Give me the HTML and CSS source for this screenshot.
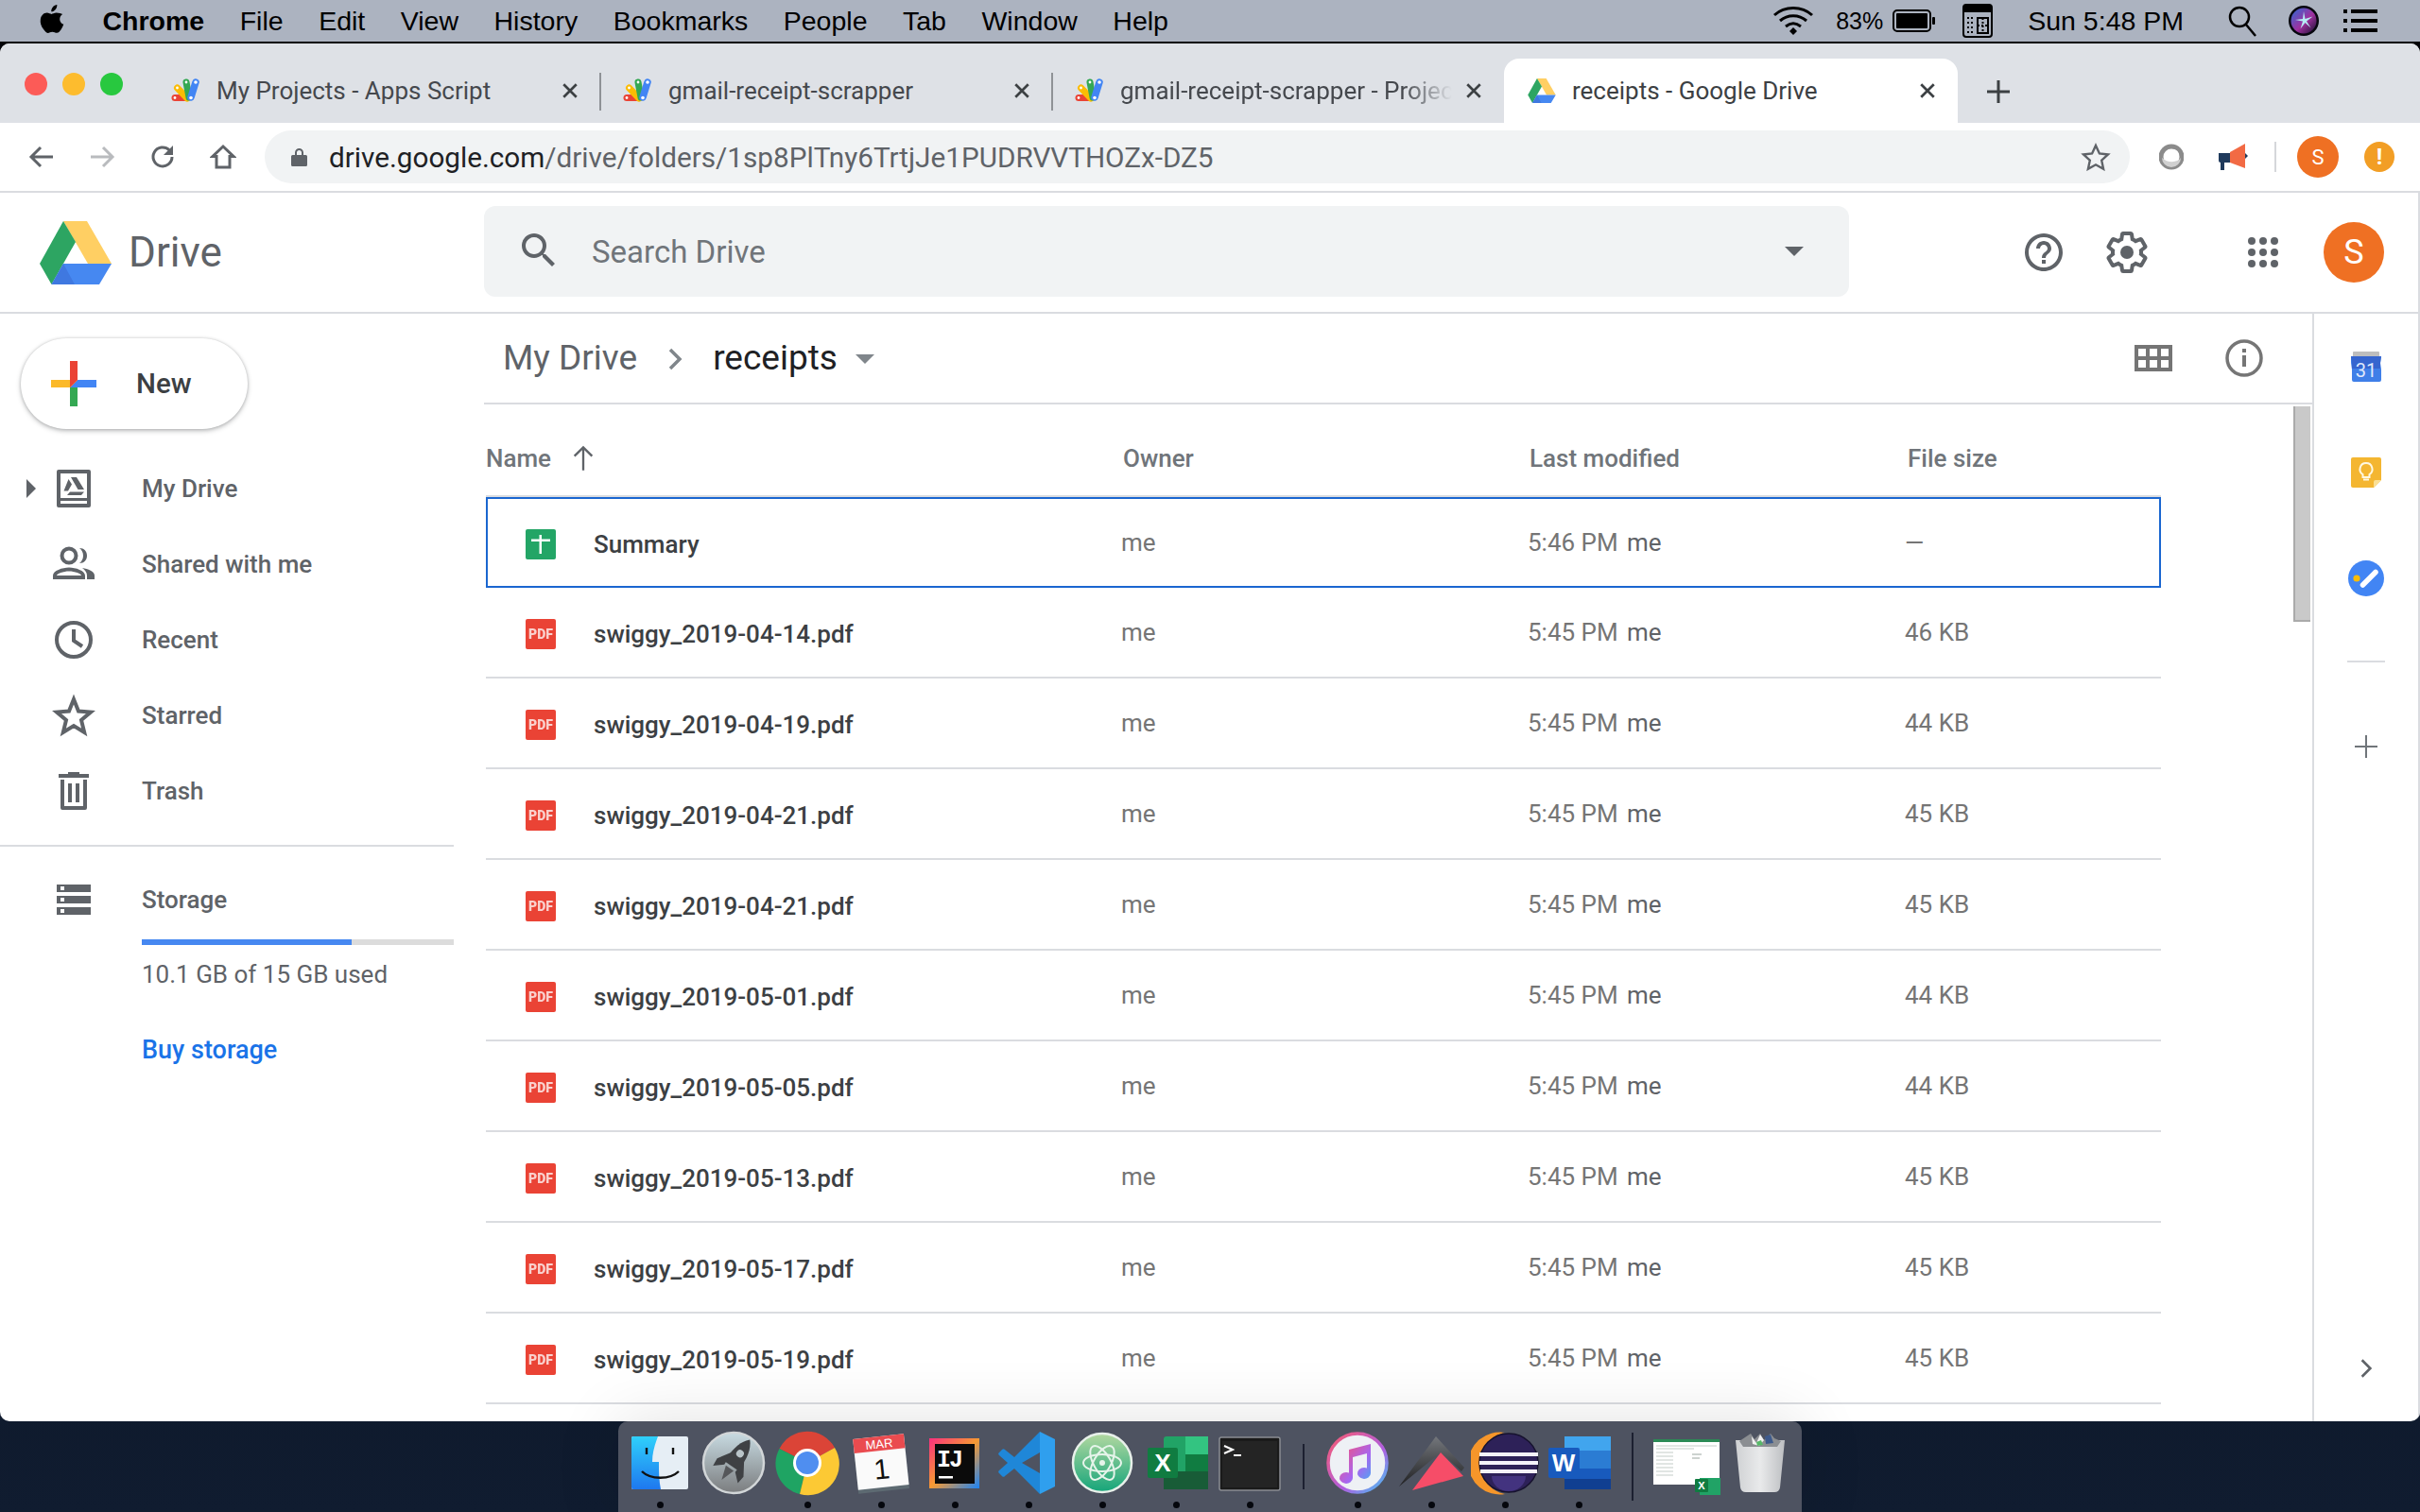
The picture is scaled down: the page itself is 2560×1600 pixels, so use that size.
FILE: index.html
```html
<!DOCTYPE html>
<html lang="en">
<head>
    <meta charset="UTF-8">
    <meta name="viewport" content="width=device-width, initial-scale=1.0">
    <title>receipts - Google Drive</title>
    <link rel="stylesheet" href="styles.css">
</head>
<body>
    <!-- shared icons -->
    <svg class="defs">
        <symbol id="apps-script" viewBox="0 0 30 26">
            <path d="M4 20.500h13" stroke="#ea4335" stroke-width="7" stroke-linecap="round"/>
            <path d="M6.500 10L17 21" stroke="#fbbc04" stroke-width="7" stroke-linecap="round"/>
            <path d="M16 4l3 16" stroke="#34a853" stroke-width="7" stroke-linecap="round"/>
            <path d="M26 4l-5 16" stroke="#4285f4" stroke-width="7.500" stroke-linecap="round"/>
            <circle cx="26" cy="4" r="1.800" fill="#fff"/><circle cx="16" cy="4" r="1.400" fill="#fff"/><circle cx="6.500" cy="10" r="1.400" fill="#fff"/><circle cx="4" cy="20.500" r="1.400" fill="#fff"/><circle cx="21" cy="20.500" r="1.800" fill="#fff"/>
        </symbol>
        <symbol id="drive-logo" viewBox="0 0 76 67">
            <path d="M25 0h25l26 45H51z" fill="#ffcf63"/>
            <path d="M25 0l13 22-25.500 45L0 45z" fill="#2da562"/>
            <path d="M25 45h51L63 67H12.500z" fill="#4688f1"/>
            <path d="M25 45l12 22H12.500z" fill="#3f78e0"/>
        </symbol>
        <symbol id="pdf" viewBox="0 0 32 32">
            <rect width="32" height="32" rx="2" fill="#ea4335"/>
            <text x="16" y="21" text-anchor="middle" class="pdf-label">PDF</text>
        </symbol>
        <symbol id="sheet" viewBox="0 0 32 32">
            <rect width="32" height="32" rx="2" fill="#23a566"/>
            <path d="M6 10.500h20V13H6zM14.500 6H17v20h-2.500z" fill="#fff"/>
        </symbol>
    </svg>

    <!-- mac menu bar -->
    <header class="menubar">
        <div class="menu-left">
            <svg class="apple" viewBox="0 0 24 30"><path d="M17 1c.2 2.200-.7 3.700-1.700 4.800-1 1.200-2.500 2.100-4 2-.2-2 .7-3.700 1.700-4.800C14 1.900 15.600 1.100 17 1zM22.500 10.300c-1.800 1.200-2.800 2.800-2.800 4.900 0 2.400 1.300 4.200 3.800 5.300-.6 1.800-1.400 3.400-2.500 5-1.200 1.700-2.400 3.400-4.200 3.400-1.800 0-2.400-1.100-4.500-1.100-2 0-2.700 1.100-4.400 1.200-1.800 0-3.100-1.900-4.300-3.600C1.100 22.200.1 18.600.6 15.400 1.200 11.600 3.800 9 7 9c1.800 0 3.300 1.200 4.500 1.200 1.100 0 2.900-1.300 5-1.200 2.400.1 4.600 1 6 1.300z"/></svg>
            <span class="menu-app">Chrome</span>
            <span>File</span><span>Edit</span><span>View</span><span>History</span><span>Bookmarks</span><span>People</span><span>Tab</span><span>Window</span><span>Help</span>
        </div>
        <div class="menu-right">
            <svg class="status-wifi" viewBox="0 0 44 32" fill="none" stroke="#000" stroke-width="3"><path d="M2 10c11-10 29-10 40 0M8 16c8-7 20-7 28 0M14 22c5-4 11-4 16 0"/><path d="M18 27l4-4 4 4-4 4z" fill="#000" stroke="none"/></svg>
            <span class="status-pct">83%</span>
            <svg class="status-batt" viewBox="0 0 46 24"><rect x="1" y="1" width="39" height="22" rx="4" fill="none" stroke="#000" stroke-width="2"/><rect x="4" y="4" width="33" height="16" rx="1"/><rect x="42" y="8" width="3" height="8" rx="1"/></svg>
            <svg class="status-kbd" viewBox="0 0 32 36"><rect x="1" y="1" width="30" height="34" rx="3" fill="none" stroke="#000" stroke-width="2"/><rect x="1" y="1" width="30" height="8"/><path d="M16 15h11v16H16z" fill="none" stroke="#000" stroke-width="2"/><path d="M16 23h11M21.500 15v16M5 15h6M5 20h6M5 25h6M5 30h6" stroke="#000" stroke-width="2" stroke-dasharray="2 2"/></svg>
            <span class="status-time">Sun 5:48 PM</span>
            <svg class="status-search" viewBox="0 0 32 34" fill="none" stroke="#000" stroke-width="2.500"><circle cx="13" cy="13" r="10"/><path d="M20 21l10 12"/></svg>
            <svg class="status-siri" viewBox="0 0 32 32"><defs><linearGradient id="siri" x1="0" y1="0" x2="1" y2="1"><stop offset="0" stop-color="#2c6bd6"/><stop offset=".55" stop-color="#a0309f"/><stop offset="1" stop-color="#12102c"/></linearGradient></defs><circle cx="16" cy="16" r="16" fill="#07070f"/><circle cx="16" cy="16" r="13.500" fill="url(#siri)"/><path d="M16 6l1.500 8 8-2.500-6.500 5 4.500 7-6-5.500-5 6.500 2.500-8-8-1.500 8-1z" fill="#b6ecf5"/></svg>
            <svg class="status-list" viewBox="0 0 36 28"><path d="M0 2h4v4H0zM8 2h28v4H8zM0 12h4v4H0zM8 12h28v4H8zM0 22h4v4H0zM8 22h28v4H8z"/></svg>
        </div>
    </header>

    <div class="window">
        <!-- tabs -->
        <div class="tabstrip">
            <div class="lights">
                <i class="light light-red"></i><i class="light light-yellow"></i><i class="light light-green"></i>
            </div>
            <div class="tab">
                <svg class="favicon"><use href="#apps-script"/></svg>
                <span class="tab-title">My Projects - Apps Script</span>
                <svg class="tab-close" viewBox="0 0 16 16"><path d="M2 2l12 12M14 2L2 14"/></svg>
                <i class="tab-sep"></i>
            </div>
            <div class="tab">
                <svg class="favicon"><use href="#apps-script"/></svg>
                <span class="tab-title">gmail-receipt-scrapper</span>
                <svg class="tab-close" viewBox="0 0 16 16"><path d="M2 2l12 12M14 2L2 14"/></svg>
                <i class="tab-sep"></i>
            </div>
            <div class="tab tab-cut">
                <svg class="favicon"><use href="#apps-script"/></svg>
                <span class="tab-title tab-fade">gmail-receipt-scrapper - Project Editor</span>
                <svg class="tab-close" viewBox="0 0 16 16"><path d="M2 2l12 12M14 2L2 14"/></svg>
            </div>
            <div class="tab tab-active">
                <svg class="favicon"><use href="#drive-logo"/></svg>
                <span class="tab-title">receipts - Google Drive</span>
                <svg class="tab-close" viewBox="0 0 16 16"><path d="M2 2l12 12M14 2L2 14"/></svg>
            </div>
            <svg class="new-tab" viewBox="0 0 28 28"><path d="M12.500 2h3v10.500H26v3H15.500V26h-3V15.500H2v-3h10.500z"/></svg>
        </div>

        <!-- address bar -->
        <div class="toolbar">
            <svg class="tool-icon" viewBox="0 0 28 28"><path d="M26 14H4M13 4L3 14l10 10"/></svg>
            <svg class="tool-icon tool-off" viewBox="0 0 28 28"><path d="M2 14h22M15 4l10 10-10 10"/></svg>
            <svg class="tool-icon" viewBox="0 0 28 28"><path d="M24 14a10 10 0 1 1-3-7.200L24 10"/><path class="tool-fill" d="M25 2v10H15z"/></svg>
            <svg class="tool-icon" viewBox="0 0 28 28"><path d="M14 3L3 13.500h4V25h14V13.500h4z"/></svg>
            <div class="omnibox">
                <svg class="lock" viewBox="0 0 17 20"><path d="M4 8V5.500a4.500 4.500 0 0 1 9 0V8h2.500a1.500 1.500 0 0 1 1.500 1.500v9a1.500 1.500 0 0 1-1.500 1.500h-14A1.500 1.500 0 0 1 0 18.500v-9A1.500 1.500 0 0 1 1.500 8zm2 0h5V5.500a2.500 2.500 0 0 0-5 0z"/></svg>
                <span class="url"><b>drive.google.com</b>/drive/folders/1sp8PlTny6TrtjJe1PUDRVVTHOZx-DZ5</span>
                <svg class="star" viewBox="0 0 32 30"><path d="M16 3l3.900 8.500 9.100 1-6.800 6.200 1.900 9.100L16 23.300 7.900 27.800l1.900-9.100L3 12.500l9.100-1z"/></svg>
            </div>
            <svg class="ext-one" viewBox="0 0 26 28"><circle cx="13" cy="14" r="11" fill="none" stroke="#8b8b8b" stroke-width="5"/><path d="M3 15a10 10 0 0 0 20 0c-3 5-14 6-20 0z" fill="#d0d0d0"/><circle cx="15" cy="12" r="6" fill="#fff"/></svg>
            <svg class="ext-two" viewBox="0 0 33 32"><path d="M2 12h12v10H8v8H4v-8a2 2 0 0 1-2-2z" fill="#1f3a5c"/><path d="M14 11l16-9v26l-16-6z" fill="#f26a44"/><path d="M30 12l3 3-3 3z" fill="#1f3a5c"/></svg>
            <i class="ext-sep"></i>
            <div class="chrome-avatar">S</div>
            <div class="chrome-alert">!</div>
        </div>

        <div class="drive">
            <!-- drive header -->
            <div class="drive-head">
                <div class="brand">
                    <svg class="brand-logo"><use href="#drive-logo"/></svg>
                    <span class="brand-name">Drive</span>
                </div>
                <div class="search">
                    <svg class="search-icon" viewBox="0 0 24 24"><path d="M15.500 14h-.79l-.28-.27C15.410 12.590 16 11.110 16 9.500 16 5.910 13.090 3 9.500 3S3 5.910 3 9.500 5.910 16 9.500 16c1.610 0 3.090-.59 4.230-1.570l.27.28v.79l5 4.990L20.490 19l-4.990-5zm-6 0C7.010 14 5 11.990 5 9.500S7.010 5 9.500 5 14 7.010 14 9.500 11.990 14 9.500 14z"/></svg>
                    <span class="search-text">Search Drive</span>
                    <i class="search-caret"></i>
                </div>
                <svg class="head-icon head-help" viewBox="0 0 24 24"><path d="M11 18h2v-2h-2v2zm1-16C6.480 2 2 6.480 2 12s4.480 10 10 10 10-4.480 10-10S17.520 2 12 2zm0 18c-4.410 0-8-3.590-8-8s3.590-8 8-8 8 3.590 8 8-3.590 8-8 8zm0-14c-2.210 0-4 1.790-4 4h2c0-1.100.9-2 2-2s2 .9 2 2c0 2-3 1.750-3 5h2c0-2.250 3-2.500 3-5 0-2.210-1.790-4-4-4z"/></svg>
                <svg class="head-icon head-gear" viewBox="0 0 24 24"><path class="gear-line" d="M19.430 12.980c.04-.32.07-.64.07-.98s-.03-.66-.07-.98l2.110-1.650c.19-.15.24-.42.12-.64l-2-3.460c-.12-.22-.39-.3-.61-.22l-2.490 1c-.52-.4-1.080-.73-1.690-.98l-.38-2.650C14.460 2.180 14.250 2 14 2h-4c-.25 0-.46.18-.49.42l-.38 2.650c-.61.25-1.170.59-1.690.98l-2.490-1c-.23-.09-.49 0-.61.22l-2 3.460c-.13.22-.07.49.12.64l2.110 1.650c-.04.32-.07.65-.07.98s.03.66.07.98l-2.110 1.650c-.19.15-.24.42-.12.64l2 3.460c.12.22.39.3.61.22l2.490-1c.52.4 1.080.73 1.690.98l.38 2.650c.03.24.24.42.49.42h4c.25 0 .46-.18.49-.42l.38-2.650c.61-.25 1.170-.59 1.690-.98l2.490 1c.23.09.49 0 .61-.22l2-3.460c.12-.22.07-.49-.12-.64z"/><circle cx="12" cy="12" r="3.500"/></svg>
                <svg class="head-apps" viewBox="0 0 32 32"><circle cx="4" cy="4" r="4"/><circle cx="16" cy="4" r="4"/><circle cx="28" cy="4" r="4"/><circle cx="4" cy="16" r="4"/><circle cx="16" cy="16" r="4"/><circle cx="28" cy="16" r="4"/><circle cx="4" cy="28" r="4"/><circle cx="16" cy="28" r="4"/><circle cx="28" cy="28" r="4"/></svg>
                <div class="head-avatar">S</div>
            </div>

            <div class="drive-body">
                <!-- left nav -->
                <aside class="sidebar">
                    <div class="new-btn">
                        <svg class="new-plus" viewBox="0 0 48 48"><path d="M20 0h8v20l-8 8z" fill="#ea4335"/><path d="M28 20h20v8H20z" fill="#4285f4"/><path d="M20 28h8v20h-8z" fill="#34a853"/><path d="M0 20h28l-8 8H0z" fill="#fbb929"/><path d="M28 20l-8 8v-8z" fill="#ea4335"/></svg>
                        <span>New</span>
                    </div>
                    <nav class="nav">
                        <div class="nav-item">
                            <span class="nav-slot"><i class="nav-caret"></i></span>
                            <svg class="nav-icon" viewBox="0 0 48 48"><path d="M8 4h32a2 2 0 0 1 2 2v36a2 2 0 0 1-2 2H8a2 2 0 0 1-2-2V6a2 2 0 0 1 2-2zm2 4v26h28V8zm0 29v3h28v-3z" fill-rule="evenodd"/><path d="M21 12h6l8 13h-6.500zM18.500 14l3.500 5.500-4 7h-4.500zM20 27.500h15L32 31H17z"/></svg>
                            <span>My Drive</span>
                        </div>
                        <div class="nav-item">
                            <span class="nav-slot"></span>
                            <svg class="nav-icon" viewBox="0 0 48 48"><circle cx="19" cy="15" r="7.500" fill="none" stroke="#5f6368" stroke-width="4"/><path d="M30 7c5 0 8 3.500 8 8s-3 8-8 8c2.500-2 4-4.500 4-8s-1.500-6-4-8z"/><path d="M2 40v-4c0-5 10-8.500 17-8.500s17 3.500 17 8.500v4zm4-4h26c0-2-7-4.500-13-4.500S6 34 6 36z"/><path d="M33 28c6 1 13 3.500 13 8v4h-8v-4c0-3-2-6-5-8z"/></svg>
                            <span>Shared with me</span>
                        </div>
                        <div class="nav-item">
                            <span class="nav-slot"></span>
                            <svg class="nav-icon nav-line" viewBox="0 0 48 48"><circle cx="24" cy="24" r="18"/><path d="M24 13v12l9 6"/></svg>
                            <span>Recent</span>
                        </div>
                        <div class="nav-item">
                            <span class="nav-slot"></span>
                            <svg class="nav-icon nav-line" viewBox="0 0 48 48"><path d="M24 7l5 12.500 13 1-10 8.500 3.200 13L24 35l-11.200 7 3.200-13-10-8.500 13-1z"/></svg>
                            <span>Starred</span>
                        </div>
                        <div class="nav-item">
                            <span class="nav-slot"></span>
                            <svg class="nav-icon" viewBox="0 0 48 48"><path d="M8 6h10V4h12v2h10v4H8zM10 12h28v30a2 2 0 0 1-2 2H12a2 2 0 0 1-2-2zm4 0v28h20V12zM18 16h4v20h-4zM26 16h4v20h-4z" fill-rule="evenodd"/></svg>
                            <span>Trash</span>
                        </div>
                    </nav>
                    <div class="side-rule"></div>
                    <div class="nav-item storage-item">
                        <span class="nav-slot"></span>
                        <svg class="nav-icon" viewBox="0 0 48 48"><path d="M6 8h36v8H6zm4 2v4h4v-4zM6 20h36v8H6zm4 2v4h4v-4zM6 32h36v8H6zm4 2v4h4v-4z" fill-rule="evenodd"/></svg>
                        <span>Storage</span>
                    </div>
                    <div class="quota-track"><div class="quota-fill"></div></div>
                    <div class="quota-text">10.1 GB of 15 GB used</div>
                    <div class="quota-buy">Buy storage</div>
                </aside>

                <!-- file list -->
                <main class="main">
                    <div class="crumbs">
                        <span class="crumb">My Drive</span>
                        <svg class="crumb-arrow" viewBox="0 0 16 24"><path d="M3 2l10 10L3 22"/></svg>
                        <span class="crumb crumb-current">receipts</span>
                        <i class="crumb-caret"></i>
                        <svg class="grid-icon" viewBox="0 0 40 28"><path d="M0 0h40v28H0zm4 4v8h8V4zm12 0v8h8V4zm12 0v8h8V4zM4 16v8h8v-8zm12 0v8h8v-8zm12 0v8h8v-8z" fill-rule="evenodd"/></svg>
                        <svg class="info-icon" viewBox="0 0 40 40"><circle cx="20" cy="20" r="18" fill="none" stroke="#757575" stroke-width="3.500"/><path d="M18 17h4v12h-4zM18 10h4v4h-4z"/></svg>
                    </div>
                    <div class="list-wrap">
                        <div class="list">
                            <div class="list-head">
                                <span class="col-name">Name <svg class="sort-arrow" viewBox="0 0 24 24"><path d="M12 23V3M4 10l8-8 8 8"/></svg></span>
                                <span class="col-owner">Owner</span>
                                <span class="col-date">Last modified</span>
                                <span class="col-size">File size</span>
                            </div>
                            <div class="row row-selected">
                                <div class="cell-name"><svg class="file-icon"><use href="#sheet"/></svg>Summary</div>
                                <div>me</div>
                                <div class="cell-date"><span>5:46 PM</span><span>me</span></div>
                                <div>—</div>
                            </div>
                            <div class="row">
                                <div class="cell-name"><svg class="file-icon"><use href="#pdf"/></svg>swiggy_2019-04-14.pdf</div>
                                <div>me</div>
                                <div class="cell-date"><span>5:45 PM</span><span>me</span></div>
                                <div>46 KB</div>
                            </div>
                            <div class="row">
                                <div class="cell-name"><svg class="file-icon"><use href="#pdf"/></svg>swiggy_2019-04-19.pdf</div>
                                <div>me</div>
                                <div class="cell-date"><span>5:45 PM</span><span>me</span></div>
                                <div>44 KB</div>
                            </div>
                            <div class="row">
                                <div class="cell-name"><svg class="file-icon"><use href="#pdf"/></svg>swiggy_2019-04-21.pdf</div>
                                <div>me</div>
                                <div class="cell-date"><span>5:45 PM</span><span>me</span></div>
                                <div>45 KB</div>
                            </div>
                            <div class="row">
                                <div class="cell-name"><svg class="file-icon"><use href="#pdf"/></svg>swiggy_2019-04-21.pdf</div>
                                <div>me</div>
                                <div class="cell-date"><span>5:45 PM</span><span>me</span></div>
                                <div>45 KB</div>
                            </div>
                            <div class="row">
                                <div class="cell-name"><svg class="file-icon"><use href="#pdf"/></svg>swiggy_2019-05-01.pdf</div>
                                <div>me</div>
                                <div class="cell-date"><span>5:45 PM</span><span>me</span></div>
                                <div>44 KB</div>
                            </div>
                            <div class="row">
                                <div class="cell-name"><svg class="file-icon"><use href="#pdf"/></svg>swiggy_2019-05-05.pdf</div>
                                <div>me</div>
                                <div class="cell-date"><span>5:45 PM</span><span>me</span></div>
                                <div>44 KB</div>
                            </div>
                            <div class="row">
                                <div class="cell-name"><svg class="file-icon"><use href="#pdf"/></svg>swiggy_2019-05-13.pdf</div>
                                <div>me</div>
                                <div class="cell-date"><span>5:45 PM</span><span>me</span></div>
                                <div>45 KB</div>
                            </div>
                            <div class="row">
                                <div class="cell-name"><svg class="file-icon"><use href="#pdf"/></svg>swiggy_2019-05-17.pdf</div>
                                <div>me</div>
                                <div class="cell-date"><span>5:45 PM</span><span>me</span></div>
                                <div>45 KB</div>
                            </div>
                            <div class="row">
                                <div class="cell-name"><svg class="file-icon"><use href="#pdf"/></svg>swiggy_2019-05-19.pdf</div>
                                <div>me</div>
                                <div class="cell-date"><span>5:45 PM</span><span>me</span></div>
                                <div>45 KB</div>
                            </div>
                        </div>
                        <div class="scroll-thumb"></div>
                    </div>
                </main>

                <!-- add-ons panel -->
                <aside class="addons">
                    <svg class="addon-cal" viewBox="0 0 32 32"><path d="M3 0h26a1 1 0 0 1 1 1v5H2V1a1 1 0 0 1 1-1z" fill="#bdbdbd"/><path d="M0 5h32l-1 7 1 7v11a2 2 0 0 1-2 2H3a2 2 0 0 1-2-2V19l-1-7z" fill="#3f7fe8"/><path d="M0 5h32l-1 7v6H1v-6z" fill="#3565cf"/><text x="16" y="27" text-anchor="middle" class="cal-label">31</text></svg>
                    <svg class="addon-keep" viewBox="0 0 32 32"><path d="M2 0h28a2 2 0 0 1 2 2v22l-8 8H2a2 2 0 0 1-2-2V2a2 2 0 0 1 2-2z" fill="#f4b631"/><path d="M32 24l-8 8v-6a2 2 0 0 1 2-2z" fill="#fadf94"/><path d="M16 6a6.500 6.500 0 0 1 3.500 12v3h-7v-3A6.500 6.500 0 0 1 16 6zM13 23.500h6" fill="none" stroke="#fff8e1" stroke-width="2"/></svg>
                    <svg class="addon-tasks" viewBox="0 0 38 38"><circle cx="19" cy="19" r="19" fill="#4285f4"/><circle cx="9" cy="19" r="3.600" fill="#fbbc04"/><path d="M15.500 26L29 12.500" stroke="#fff" stroke-width="5.500" stroke-linecap="round"/></svg>
                    <i class="addon-rule"></i>
                    <svg class="addon-plus" viewBox="0 0 24 24"><path d="M11 0h2v11h11v2H13v11h-2V13H0v-2h11z"/></svg>
                    <svg class="addon-chevron" viewBox="0 0 16 24"><path d="M3 2l10 10L3 22"/></svg>
                </aside>
            </div>
        </div>
    </div>

    <!-- dock -->
    <div class="dock">
        <div class="dock-item">
            <svg viewBox="0 0 72 72"><defs><linearGradient id="finder-blue" x1="0" y1="0" x2="0" y2="1"><stop offset="0" stop-color="#2fd0fb"/><stop offset="1" stop-color="#1e78ef"/></linearGradient></defs><rect x="6" y="8" width="60" height="56" rx="2" fill="#e6eef5"/><path d="M8 8h26c-3 8-6 17-6 27h7c0 10 0 20 2 29H8a2 2 0 0 1-2-2V10a2 2 0 0 1 2-2z" fill="url(#finder-blue)"/><path d="M22 20v7M50 20v7" stroke="#111" stroke-width="2.400"/><path d="M17 45c9 9 30 9 39 0" fill="none" stroke="#111" stroke-width="2.400"/></svg>
            <i class="dock-dot"></i>
        </div>
        <div class="dock-item">
            <svg viewBox="0 0 72 72"><defs><linearGradient id="rocket-bg" x1="0" y1="0" x2="0" y2="1"><stop offset="0" stop-color="#c8dbe2"/><stop offset="1" stop-color="#7b7d7f"/></linearGradient></defs><circle cx="36" cy="36" r="32" fill="url(#rocket-bg)" stroke="#d2d6d8" stroke-width="2.500"/><g transform="rotate(35 36 36)" fill="#3f4144"><path d="M36 6c8 8 10 22 8 34H28c-2-12 0-26 8-34z"/><path d="M28 28l-9 14 1 9 9-8zM44 28l9 14-1 9-9-8z"/><path d="M31 43h10l-5 15z" fill="#55575a"/><circle cx="36" cy="24" r="4" fill="#b9c4c8"/></g></svg>
        </div>
        <div class="dock-item">
            <svg viewBox="0 0 72 72"><path d="M36 36L6.500 21A33 33 0 0 1 65 20z" fill="#db4437"/><path d="M36 36L6.500 21A33 33 0 0 0 28 69z" fill="#1fa463"/><path d="M36 36L65 20A33 33 0 0 1 28 69z" fill="#fcc934"/><circle cx="36" cy="36" r="15" fill="#fff"/><circle cx="36" cy="36" r="12" fill="#4f8ef0"/></svg>
            <i class="dock-dot"></i>
        </div>
        <div class="dock-item">
            <svg viewBox="0 0 72 72"><g transform="rotate(-6 36 36)"><rect x="9" y="8" width="54" height="58" fill="#5d6a72"/><rect x="9" y="8" width="54" height="54" fill="#fafafa"/><rect x="9" y="8" width="54" height="15" fill="#ea4b4f"/><text x="36" y="20.500" text-anchor="middle" class="dock-mar">MAR</text><text x="36" y="53" text-anchor="middle" class="dock-day">1</text></g></svg>
            <i class="dock-dot"></i>
        </div>
        <div class="dock-item">
            <svg viewBox="0 0 72 72"><defs><linearGradient id="ij-bg" x1="0" y1="0" x2="1" y2="1"><stop offset="0" stop-color="#fc2f7f"/><stop offset=".5" stop-color="#f79a33"/><stop offset="1" stop-color="#1b83f5"/></linearGradient></defs><rect x="9" y="10" width="53" height="53" fill="url(#ij-bg)"/><rect x="15" y="16" width="42" height="42" fill="#0b0b0b"/><text x="30" y="40" text-anchor="middle" class="dock-ij">IJ</text><rect x="19" y="50" width="15" height="2.500" fill="#fff"/></svg>
            <i class="dock-dot"></i>
        </div>
        <div class="dock-item">
            <svg viewBox="0 0 72 72"><path d="M48 3l16 8v50l-16 8V3z" fill="#2f9fee"/><path d="M48 3L21 30 11 22a2 2 0 0 0-3 0l-3 3a2 2 0 0 0 0 3l9 8-9 8a2 2 0 0 0 0 3l3 3a2 2 0 0 0 3 0l10-8 27 27V47L29 36l19-11z" fill="#1f87d8"/></svg>
            <i class="dock-dot"></i>
        </div>
        <div class="dock-item">
            <svg viewBox="0 0 72 72" fill="none"><defs><linearGradient id="atom-bg" x1="0" y1="0" x2="0" y2="1"><stop offset="0" stop-color="#b2d8a0"/><stop offset="1" stop-color="#15a57a"/></linearGradient></defs><circle cx="36" cy="36" r="31" fill="url(#atom-bg)" stroke="#e8f0ea" stroke-width="2.500"/><g stroke="#e6f4ea" stroke-width="2"><ellipse cx="36" cy="36" rx="20" ry="9"/><ellipse cx="36" cy="36" rx="20" ry="9" transform="rotate(60 36 36)"/><ellipse cx="36" cy="36" rx="20" ry="9" transform="rotate(120 36 36)"/></g><circle cx="36" cy="36" r="3" fill="#e6f4ea"/></svg>
            <i class="dock-dot"></i>
        </div>
        <div class="dock-item">
            <svg viewBox="0 0 72 72"><rect x="23" y="8" width="47" height="56" rx="3" fill="#21a366"/><rect x="46" y="8" width="24" height="19" fill="#33c481"/><rect x="23" y="45" width="47" height="19" fill="#185c37"/><rect x="46" y="27" width="24" height="18" fill="#107c41"/><rect x="6" y="20" width="32" height="32" rx="2" fill="#107c41"/><text x="22" y="45" text-anchor="middle" class="dock-office">X</text></svg>
            <i class="dock-dot"></i>
        </div>
        <div class="dock-item">
            <svg viewBox="0 0 72 72"><rect x="4" y="9" width="64" height="56" rx="2" fill="#1a1a1a" stroke="#8a8d92" stroke-width="1.500"/><rect x="7" y="13" width="58" height="49" fill="#242424"/><path d="M9 18l9 4-9 4" fill="none" stroke="#fff" stroke-width="2"/><path d="M19 28h8" stroke="#fff" stroke-width="2"/></svg>
            <i class="dock-dot"></i>
        </div>
        <div class="dock-sep"></div>
        <div class="dock-item">
            <svg viewBox="0 0 72 72"><defs><linearGradient id="music-ring" x1="0" y1="0" x2="1" y2="1"><stop offset="0" stop-color="#fa5a6e"/><stop offset=".6" stop-color="#b05fe0"/><stop offset="1" stop-color="#3fc8f5"/></linearGradient><linearGradient id="music-note" x1="0" y1="0" x2="1" y2="1"><stop offset="0" stop-color="#fb4f6f"/><stop offset=".6" stop-color="#a866f0"/><stop offset="1" stop-color="#45aaf2"/></linearGradient></defs><circle cx="36" cy="36" r="31" fill="#eef1f5" stroke="url(#music-ring)" stroke-width="3.500"/><path d="M27 22l23-6v31a7 6 0 1 1-4-5.500V26l-15 4v22a7 6 0 1 1-4-5.500z" fill="url(#music-note)"/></svg>
            <i class="dock-dot"></i>
        </div>
        <div class="dock-item">
            <svg viewBox="0 0 72 72"><defs><linearGradient id="tri-dark" x1="0" y1="0" x2="0" y2="1"><stop offset="0" stop-color="#74777c"/><stop offset="1" stop-color="#1f2022"/></linearGradient></defs><path d="M41 8l30 33-3 4-22-20L2 61z" fill="url(#tri-dark)"/><path d="M46 25l24 25-54 15z" fill="#f64d68"/></svg>
            <i class="dock-dot"></i>
        </div>
        <div class="dock-item">
            <svg viewBox="0 0 72 72"><path d="M36 4a33 33 0 1 0 0 65c-15-3-26-16-26-32S21 7 36 4z" fill="#f6962a"/><circle cx="40" cy="36" r="31" fill="#2d2158" stroke="#16122e" stroke-width="1.500"/><path d="M9 25h62v4H9zM9 34h62v4H9zM10 43h60v4H10z" fill="#f4f2fa"/><path d="M22 50h36a18 16 0 0 1-36 0z" fill="#43337f"/></svg>
            <i class="dock-dot"></i>
        </div>
        <div class="dock-item">
            <svg viewBox="0 0 72 72"><rect x="21" y="8" width="49" height="56" rx="3" fill="#2b7cd3"/><rect x="21" y="8" width="49" height="15" fill="#41a5ee"/><rect x="21" y="42" width="49" height="11" fill="#185abd"/><rect x="21" y="53" width="49" height="11" fill="#103f91"/><rect x="4" y="20" width="33" height="32" rx="2" fill="#185abd"/><text x="20" y="45" text-anchor="middle" class="dock-office">W</text></svg>
            <i class="dock-dot"></i>
        </div>
        <div class="dock-sep dock-sep-tall"></div>
        <div class="dock-item">
            <svg viewBox="0 0 72 72"><rect x="1" y="11" width="70" height="48" fill="#fff"/><rect x="1" y="11" width="70" height="3" fill="#2b8a55"/><path d="M4 18h64M4 21h40M4 25h18M4 29h18M4 33h18M4 37h18M4 41h18M4 45h18M4 49h18" stroke="#c3ccc7" stroke-width="1"/><path d="M42 27h10M42 31h8" stroke="#9aa5a0" stroke-width="1"/><path d="M50 52h22v18H50z" fill="#21a366"/><rect x="45" y="53" width="14" height="14" rx="1" fill="#107c41"/><text x="52" y="64" text-anchor="middle" class="dock-thumb-x">X</text></svg>
        </div>
        <div class="dock-item">
            <svg viewBox="0 0 72 72"><defs><linearGradient id="trash-cup" x1="0" y1="0" x2="1" y2="0"><stop offset="0" stop-color="#cfd1d3"/><stop offset=".5" stop-color="#e9eaeb"/><stop offset="1" stop-color="#bdbfc2"/></linearGradient></defs><path d="M10 12h52l-5 50a6 6 0 0 1-6 5H21a6 6 0 0 1-6-5z" fill="url(#trash-cup)"/><path d="M14 13l6-4 6-4 4 6 6-6 4 7 7-7 4 5 7 3-4 6H18z" fill="#8b8e92"/><path d="M27 8l5 7 4-9 4 6-5 6-7-2z" fill="#f1f1f1"/><path d="M41 8l6-2 3 9-8 1z" fill="#3d5a8c"/><path d="M32 14l5-2 2 5-6 1z" fill="#57b868"/></svg>
        </div>
    </div>
</body>
</html>
```

FILE: styles.css
```css
* {
    box-sizing: border-box;
}
body {
    margin: 0;
    height: 1600px;
    overflow: hidden;
    font-family: Roboto, "Liberation Sans", sans-serif;
    background: linear-gradient(#020307, #101c30);
    display: flex;
    flex-direction: column;
}
svg {
    display: block;
    flex: none;
}
.defs {
    position: absolute;
    width: 0;
    height: 0;
}
.pdf-label {
    font: 900 14px Roboto, sans-serif;
    fill: #fff;
    opacity: .75;
}

/* menu bar */
.menubar {
    height: 46px;
    background: #acb3c0;
    border-bottom: 2px solid #000;
    display: flex;
    justify-content: space-between;
    align-items: center;
    color: #000;
    font: 28.500px "Liberation Sans", sans-serif;
}
.menu-left {
    display: flex;
    align-items: center;
    padding-left: 42px;
    gap: 37.500px;
}
.apple {
    width: 26px;
    height: 32px;
    margin-right: 3px;
    margin-top: -4px;
}
.menu-app {
    font-weight: bold;
}
.menu-right {
    display: flex;
    align-items: center;
    padding-right: 45px;
}
.status-wifi { width: 44px; height: 32px; }
.status-pct { font-size: 25px; margin-left: 23px; }
.status-batt { width: 46px; height: 24px; margin-left: 10px; }
.status-kbd { width: 32px; height: 36px; margin-left: 28px; }
.status-time { margin-left: 37px; }
.status-search { width: 32px; height: 34px; margin-left: 46px; }
.status-siri { width: 32px; height: 32px; margin-left: 33px; }
.status-list { width: 36px; height: 28px; margin-left: 26px; }

/* browser */
.window {
    height: 1458px;
    flex: none;
    background: #fff;
    border-radius: 10px 10px 10px 10px;
    overflow: hidden;
    display: flex;
    flex-direction: column;
}
.tabstrip {
    height: 84px;
    flex: none;
    background: #dee1e6;
    display: flex;
    align-items: flex-end;
}
.lights {
    width: 157px;
    align-self: flex-start;
    margin-top: 31px;
    padding-left: 26px;
    display: flex;
    gap: 16px;
}
.light {
    width: 24px;
    height: 24px;
    border-radius: 50%;
}
.light-red { background: #fc5b57; }
.light-yellow { background: #fdbc2e; }
.light-green { background: #28c83f; }
.tab {
    width: 478px;
    height: 68px;
    flex: none;
    display: flex;
    align-items: center;
    padding-left: 24px;
    padding-right: 23px;
    position: relative;
    color: #45484d;
    font-size: 26px;
}
.tab-sep {
    position: absolute;
    right: -1px;
    top: 15px;
    height: 40px;
    width: 2px;
    background: #8f9296;
}
.favicon {
    width: 30px;
    height: 26px;
}
.tab-title {
    flex: 1;
    margin-left: 18px;
    white-space: nowrap;
    overflow: hidden;
}
.tab-fade {
    margin-right: 14px;
    -webkit-mask-image: linear-gradient(to right, #000 85%, transparent);
    mask-image: linear-gradient(to right, #000 85%, transparent);
}
.tab-close {
    width: 18px;
    height: 18px;
    stroke: #3c4043;
    stroke-width: 2.400;
    fill: none;
}
.tab-active {
    width: 480px;
    background: #fff;
    border-radius: 16px 16px 0 0;
    padding-left: 25px;
    padding-right: 23px;
    color: #3c4043;
}
.tab-active .tab-title {
    margin-left: 17px;
}
.new-tab {
    width: 28px;
    height: 28px;
    fill: #3c4043;
    align-self: center;
    margin-left: 29px;
    margin-top: 18px;
}
.toolbar {
    height: 74px;
    flex: none;
    background: #fff;
    border-bottom: 2px solid #dadce0;
    display: flex;
    align-items: center;
    padding-left: 30px;
    gap: 36px;
}
.tool-icon {
    width: 28px;
    height: 28px;
    fill: none;
    stroke: #5f6368;
    stroke-width: 3;
}
.tool-off {
    stroke: #b9bbbe;
}
.tool-fill {
    fill: #5f6368;
    stroke: none;
}
.omnibox {
    width: 1973px;
    height: 56px;
    margin-left: -6px;
    margin-right: -5px;
    background: #f1f3f4;
    border-radius: 28px;
    display: flex;
    align-items: center;
    padding-left: 28px;
    padding-right: 20px;
    font-size: 29.700px;
    color: #5f6368;
}
.lock {
    width: 17px;
    height: 20px;
    fill: #5f6368;
    margin-right: 23px;
}
.url {
    flex: 1;
    white-space: nowrap;
}
.url b {
    font-weight: 400;
    color: #202124;
}
.star {
    width: 32px;
    height: 30px;
    fill: none;
    stroke: #5f6368;
    stroke-width: 2.400;
}
.ext-one { width: 26px; height: 28px; }
.ext-two { width: 33px; height: 32px; margin-left: -1px; }
.ext-sep {
    width: 2px;
    height: 32px;
    background: #d5d7da;
    margin-left: -8px;
}
.chrome-avatar {
    width: 44px;
    height: 44px;
    border-radius: 50%;
    background: #ef7023;
    color: #fff;
    font-size: 22px;
    display: flex;
    align-items: center;
    justify-content: center;
    margin-left: -14px;
}
.chrome-alert {
    width: 32px;
    height: 32px;
    border-radius: 50%;
    background: #f29e25;
    color: #fff;
    font-size: 24px;
    font-weight: bold;
    display: flex;
    align-items: center;
    justify-content: center;
    margin-left: -9px;
}

/* drive */
.drive {
    flex: 1;
    min-height: 0;
    display: flex;
    flex-direction: column;
    border-right: 2px solid #dadce0;
}
.drive-head {
    height: 128px;
    flex: none;
    border-bottom: 2px solid #dadce0;
    display: flex;
    align-items: center;
}
.brand {
    width: 512px;
    flex: none;
    display: flex;
    align-items: center;
    padding-left: 42px;
}
.brand-logo {
    width: 76px;
    height: 67px;
}
.brand-name {
    margin-left: 18px;
    font-size: 44px;
    color: #5f6368;
}
.search {
    width: 1444px;
    height: 96px;
    flex: none;
    margin-top: -2px;
    background: #f1f3f4;
    border-radius: 12px;
    display: flex;
    align-items: center;
    padding-left: 34px;
    color: #70757a;
    font-size: 33px;
}
.search-icon {
    width: 48px;
    height: 48px;
    fill: #5f6368;
    margin-top: -2px;
}
.search-text {
    margin-left: 32px;
    flex: 1;
}
.search-caret {
    border-left: 10px solid transparent;
    border-right: 10px solid transparent;
    border-top: 10px solid #5f6368;
    margin-right: 48px;
}
.head-icon {
    width: 48px;
    height: 48px;
    fill: #5f6368;
}
.head-help {
    margin-left: 182px;
}
.head-gear {
    margin-left: 40px;
}
.gear-line {
    fill: none;
    stroke: #5f6368;
    stroke-width: 2;
}
.head-apps {
    width: 32px;
    height: 32px;
    fill: #5f6368;
    margin-left: 104px;
}
.head-avatar {
    width: 64px;
    height: 64px;
    border-radius: 50%;
    background: #ef7023;
    color: #fff;
    font-size: 36px;
    display: flex;
    align-items: center;
    justify-content: center;
    margin-left: 48px;
}
.drive-body {
    flex: 1;
    min-height: 0;
    display: flex;
}
.sidebar {
    width: 512px;
    flex: none;
    padding-top: 26px;
    color: #5f6368;
}
.new-btn {
    width: 240px;
    height: 96px;
    margin-left: 22px;
    border-radius: 48px;
    background: #fff;
    box-shadow: 0 2px 5px rgba(60, 64, 67, .35), 0 0 3px rgba(60, 64, 67, .2);
    display: flex;
    align-items: center;
    padding-left: 32px;
    font-size: 29.500px;
    font-weight: 500;
    color: #3c4043;
}
.new-plus {
    width: 48px;
    height: 48px;
    margin-right: 42px;
}
.nav {
    margin-top: 23px;
}
.nav-item {
    height: 80px;
    display: flex;
    align-items: center;
    font-size: 26px;
    font-weight: 500;
}
.nav-slot {
    width: 54px;
    padding-left: 28px;
}
.nav-caret {
    display: block;
    border-top: 10px solid transparent;
    border-bottom: 10px solid transparent;
    border-left: 10px solid #5f6368;
    width: 0;
}
.nav-icon {
    width: 48px;
    height: 48px;
    fill: #5f6368;
    margin-right: 48px;
}
.nav-line {
    fill: none;
    stroke: #5f6368;
    stroke-width: 4;
}
.side-rule {
    width: 480px;
    height: 2px;
    background: #dadce0;
    margin-top: 17px;
}
.storage-item {
    margin-top: 16px;
}
.quota-track {
    width: 330px;
    height: 6px;
    margin: 2px 0 0 150px;
    background: #dcdcdc;
}
.quota-fill {
    width: 222px;
    height: 6px;
    background: #4688f1;
}
.quota-text {
    margin: 11px 0 0 150px;
    font-size: 26px;
    line-height: 40px;
}
.quota-buy {
    margin: 40px 0 0 150px;
    font-size: 27px;
    font-weight: 500;
    line-height: 40px;
    color: #1a73e8;
}
.main {
    width: 1934px;
    flex: none;
    display: flex;
    flex-direction: column;
    min-height: 0;
}
.crumbs {
    height: 96px;
    flex: none;
    border-bottom: 2px solid #dadce0;
    display: flex;
    align-items: center;
    padding-left: 20px;
    padding-bottom: 2px;
    font-size: 37px;
    color: #5f6368;
}
.crumb-arrow {
    width: 16px;
    height: 24px;
    fill: none;
    stroke: #80868b;
    stroke-width: 3.500;
    margin: 4px 32px 0 32px;
}
.crumb-current {
    color: #202124;
}
.crumb-caret {
    border-left: 10px solid transparent;
    border-right: 10px solid transparent;
    border-top: 10px solid #80868b;
    margin-left: 19px;
    margin-top: 4px;
}
.grid-icon {
    width: 40px;
    height: 28px;
    fill: #757575;
    margin-left: auto;
    margin-top: 2px;
}
.info-icon {
    width: 40px;
    height: 40px;
    fill: #757575;
    margin: 2px 52px 0 56px;
}
.list-wrap {
    flex: 1;
    min-height: 0;
    display: flex;
    justify-content: space-between;
    align-items: flex-start;
    padding-left: 2px;
    padding-right: 2px;
    overflow: hidden;
}
.list {
    width: 1772px;
}
.list-head,
.row {
    display: grid;
    grid-template-columns: 672px 430px 399px 1fr;
    align-items: center;
}
.list-head {
    height: 98px;
    padding-top: 18px;
    border-bottom: 2px solid #dadce0;
    font-size: 26px;
    font-weight: 500;
    color: #70757a;
}
.col-name {
    display: flex;
    align-items: center;
    gap: 20px;
}
.col-owner { padding-left: 2px; }
.col-date { padding-left: 2px; }
.col-size { padding-left: 3px; }
.sort-arrow {
    width: 28px;
    height: 28px;
    fill: none;
    stroke: #5f6368;
    stroke-width: 2;
}
.row {
    height: 96px;
    border-bottom: 2px solid #dadce0;
    font-size: 26px;
    color: #757575;
}
.row-selected {
    border: 2px solid #1a66d0;
    grid-template-columns: 670px 430px 399px 1fr;
}
.cell-name {
    display: flex;
    align-items: center;
    font-size: 26px;
    font-weight: 500;
    color: #3c4043;
    padding-left: 42px;
    padding-top: 3px;
}
.row-selected .cell-name {
    padding-left: 40px;
}
.file-icon {
    width: 32px;
    height: 32px;
    margin-right: 40px;
}
.cell-date {
    display: flex;
    gap: 8px;
}
.cell-date span:last-child {
    color: #5f6368;
}
.cell-date span:first-child {
    width: 97px;
    white-space: nowrap;
}
.scroll-thumb {
    width: 18px;
    height: 228px;
    margin-top: 2px;
    background: #c9c9c9;
    border-left: 2px solid #aaa;
    border-bottom: 2px solid #aaa;
}
.addons {
    flex: 1;
    border-left: 2px solid #dadce0;
    display: flex;
    flex-direction: column;
    align-items: center;
    padding-top: 40px;
    padding-bottom: 45px;
}
.addon-cal { width: 32px; height: 32px; }
.cal-label {
    font: 20px Roboto, sans-serif;
    fill: #dfe8fb;
}
.addon-keep { width: 32px; height: 32px; margin-top: 80px; }
.addon-tasks { width: 38px; height: 38px; margin-top: 77px; }
.addon-rule {
    width: 40px;
    height: 2px;
    background: #dadce0;
    margin-top: 68px;
}
.addon-plus {
    width: 24px;
    height: 24px;
    fill: #70757a;
    margin-top: 77px;
}
.addon-chevron {
    width: 14px;
    height: 22px;
    fill: none;
    stroke: #5f6368;
    stroke-width: 3;
    margin-top: auto;
}

/* dock */
.dock {
    width: 1252px;
    height: 96px;
    flex: none;
    margin: 0 auto;
    background: #4e5361;
    border-radius: 10px 10px 0 0;
    padding-left: 5px;
    display: flex;
    position: relative;
    box-shadow: 0 0 70px rgba(0, 0, 0, .12);
}
.dock-item {
    width: 78px;
    padding-top: 8px;
    display: flex;
    flex-direction: column;
    align-items: center;
}
.dock-item svg {
    width: 72px;
    height: 72px;
}
.dock-dot {
    width: 7px;
    height: 7px;
    margin-top: 5px;
    border-radius: 50%;
    background: #05070d;
}
.dock-sep {
    width: 36px;
    display: flex;
    justify-content: center;
    align-items: flex-start;
    padding-top: 24px;
}
.dock-sep::before {
    content: "";
    width: 2px;
    height: 48px;
    background: #1c2030;
}
.dock-sep-tall {
    padding-top: 12px;
}
.dock-sep-tall::before {
    height: 72px;
}
.dock-mar {
    font: 13px "Liberation Sans", sans-serif;
    fill: #fff;
}
.dock-day {
    font: 30px "Liberation Sans", sans-serif;
    fill: #111;
}
.dock-ij {
    font: bold 25px "Liberation Mono", monospace;
    letter-spacing: -2px;
    fill: #fff;
}
.dock-office {
    font: bold 26px "Liberation Sans", sans-serif;
    fill: #fff;
}
.dock-thumb-x {
    font: bold 11px "Liberation Sans", sans-serif;
    fill: #fff;
}
```
